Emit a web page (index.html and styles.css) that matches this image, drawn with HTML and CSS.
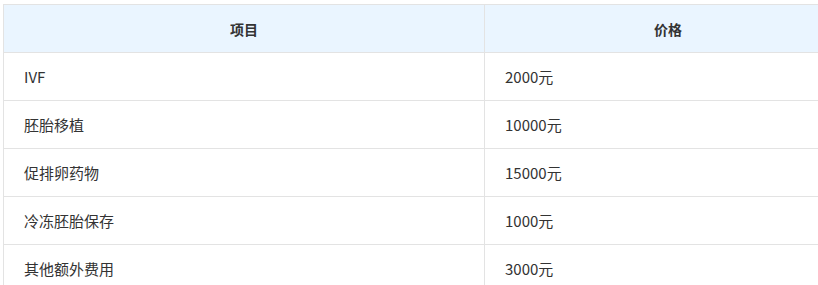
FILE: index.html
```html
<!DOCTYPE html>
<html lang="zh">
<head>
<meta charset="utf-8">
<link rel="stylesheet" href="styles.css">
</head>
<body>
<table class="price-table">
  <thead>
    <tr><th class="col-item">项目</th><th class="col-price">价格</th></tr>
  </thead>
  <tbody>
    <tr><td>IVF</td><td>2000元</td></tr>
    <tr><td>胚胎移植</td><td>10000元</td></tr>
    <tr><td>促排卵药物</td><td>15000元</td></tr>
    <tr><td>冷冻胚胎保存</td><td>1000元</td></tr>
    <tr><td>其他额外费用</td><td>3000元</td></tr>
  </tbody>
</table>
</body>
</html>
```
FILE: styles.css
```css
html, body {
  margin: 0;
  background: #ffffff;
}
body {
  padding: 4px 0 0 3px;
  font-family: "Noto Sans CJK SC", "Noto Sans", sans-serif;
  color: #333333;
  overflow: hidden;
}
.price-table {
  border-collapse: collapse;
  width: 849px;
  table-layout: fixed;
}
.col-item { width: 481px; }
.price-table th,
.price-table td {
  border: 1px solid #e3e3e3;
  height: 48px;
  padding: 0 20px;
  box-sizing: border-box;
}
.price-table th {
  background: #eaf5ff;
  font-size: 14px;
  font-weight: bold;
  text-align: center;
  color: #333333;
}
.price-table td {
  font-size: 15px;
  text-align: left;
}
```
